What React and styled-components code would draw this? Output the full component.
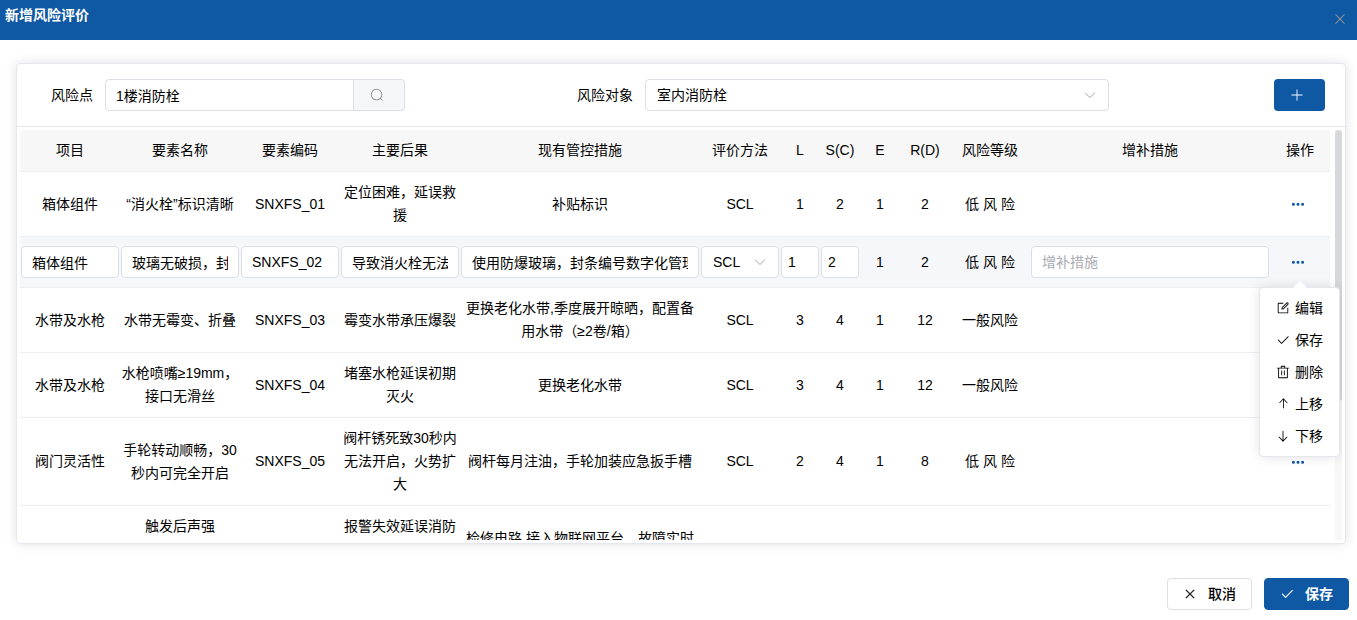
import React, { useState } from "react";
import styled, { createGlobalStyle, css } from "styled-components";

const GlobalStyle = createGlobalStyle`
  * {
    box-sizing: border-box;
  }

  body {
    margin: 0;
    background: #fff;
    color: #000;
    font-family: "Liberation Sans", "Noto Sans CJK SC", sans-serif;
    font-size: 14px;
  }

  button,
  input,
  select {
    font: inherit;
    color: inherit;
  }
`;

const icons = {
  search:
    "m795.904 750.72 124.992 124.928a32 32 0 0 1-45.248 45.248L750.656 795.904a416 416 0 1 1 45.248-45.248zM480 832a352 352 0 1 0 0-704 352 352 0 0 0 0 704z",
  arrowDown:
    "M831.872 340.864 512 652.672 192.128 340.864a30.592 30.592 0 0 0-42.752 0 29.12 29.12 0 0 0 0 41.6L489.664 714.24a32 32 0 0 0 44.672 0l340.288-331.712a29.12 29.12 0 0 0 0-41.728 30.592 30.592 0 0 0-42.752 0z",
  close:
    "M764.288 214.592 512 466.88 259.712 214.592a31.936 31.936 0 0 0-45.12 45.12L466.752 512 214.528 764.224a31.936 31.936 0 1 0 45.12 45.184L512 557.184l252.288 252.288a31.936 31.936 0 0 0 45.12-45.12L557.12 512.064l252.288-252.352a31.936 31.936 0 1 0-45.12-45.184z",
  plus:
    "M480 480V128a32 32 0 0 1 64 0v352h352a32 32 0 1 1 0 64H544v352a32 32 0 1 1-64 0V544H128a32 32 0 0 1 0-64h352z",
  check:
    "M406.656 706.944 195.84 496.256a32 32 0 1 0-45.248 45.248l256 256 512-512a32 32 0 0 0-45.248-45.248L406.592 706.944z",
  more:
    "M176 416a112 112 0 1 1 0 224 112 112 0 0 1 0-224zm336 0a112 112 0 1 1 0 224 112 112 0 0 1 0-224zm336 0a112 112 0 1 1 0 224 112 112 0 0 1 0-224z",
  edit:
    "M832 512a32 32 0 1 1 64 0v352a32 32 0 0 1-32 32H160a32 32 0 0 1-32-32V160a32 32 0 0 1 32-32h352a32 32 0 0 1 0 64H192v640h640V512z M469.952 554.24l52.8-7.552L847.104 222.4a32 32 0 1 0-45.248-45.248L477.44 501.44l-7.552 52.8zm422.4-422.4a96 96 0 0 1 0 135.808l-331.84 331.84a32 32 0 0 1-18.112 9.088L436.8 623.68a32 32 0 0 1-36.224-36.224l15.104-105.6a32 32 0 0 1 9.024-18.112l331.904-331.84a96 96 0 0 1 135.744 0z",
  remove:
    "M160 256H96a32 32 0 0 1 0-64h256V95.936a32 32 0 0 1 32-32h256a32 32 0 0 1 32 32V192h256a32 32 0 1 1 0 64h-64v672a32 32 0 0 1-32 32H192a32 32 0 0 1-32-32V256zm448-64v-64H416v64h192zM224 896h576V256H224v640zm192-128a32 32 0 0 1-32-32V416a32 32 0 0 1 64 0v320a32 32 0 0 1-32 32zm192 0a32 32 0 0 1-32-32V416a32 32 0 0 1 64 0v320a32 32 0 0 1-32 32z",
  up:
    "M572.235 205.282v600.365a30.118 30.118 0 1 1-60.235 0V205.282L292.382 438.633a28.913 28.913 0 0 1-42.646 0 33.43 33.43 0 0 1 0-45.236l271.058-288.045a28.913 28.913 0 0 1 42.647 0L834.5 393.397a33.43 33.43 0 0 1 0 45.176 28.913 28.913 0 0 1-42.647 0l-219.618-233.23z",
  down:
    "M544 805.888V168a32 32 0 1 0-64 0v637.888L246.656 557.952a30.72 30.72 0 0 0-45.312 0 35.52 35.52 0 0 0 0 48.064l288 306.048a30.72 30.72 0 0 0 45.312 0l288-306.048a35.52 35.52 0 0 0 0-48 30.72 30.72 0 0 0-45.312 0L544 805.824z"
};

const Svg = styled.svg`
  flex: none;
  display: block;
  width: ${props => props.$size}px;
  height: ${props => props.$size}px;
  fill: currentColor;
`;

const Icon = ({ name, size = 14 }) => (
  <Svg viewBox="0 0 1024 1024" $size={size} aria-hidden="true">
    <path d={icons[name]} />
  </Svg>
);

const DialogHeader = styled.header`
  display: flex;
  justify-content: space-between;
  align-items: flex-start;
  height: 40px;
  padding: 5px 9px 5px 5px;
  background: #0f59a4;
`;

const DialogTitle = styled.h1`
  margin: 0;
  font-size: 14px;
  line-height: 20px;
  font-weight: 700;
  color: #fff;
`;

const CloseButton = styled.button`
  padding: 6px 0;
  border: 0;
  background: none;
  color: #909399;
  cursor: pointer;
`;

const Card = styled.section`
  margin: 23px 11px 0 16px;
  border: 1px solid #e4e7ed;
  border-radius: 4px;
  background: #fff;
  box-shadow: 0 0 12px rgba(0, 0, 0, 0.12);
`;

const SearchForm = styled.form`
  display: grid;
  grid-template-columns: 92fr 43fr 133fr 54fr;
  padding: 15px 20px;
  border-bottom: 1px solid #e4e7ed;
`;

const Field = styled.div`
  grid-column: ${props => props.$column};
  display: flex;
  align-items: center;
`;

const Label = styled.label`
  flex: none;
  min-width: ${props => props.$width || 0}px;
  padding-right: 12px;
  text-align: right;
  line-height: 32px;
`;

const control = css`
  display: block;
  width: 100%;
  min-width: 0;
  height: 32px;
  border: 1px solid #dcdfe6;
  border-radius: 4px;
  background: #fff;
  outline: none;
`;

const Input = styled.input`
  ${control}
  padding: 0 ${props => (props.$narrow ? 6 : 10)}px;

  &::placeholder {
    color: #a8abb2;
    opacity: 1;
  }
`;

const InputGroup = styled.div`
  flex: 1;
  display: flex;

  ${Input} {
    border-radius: 4px 0 0 4px;
  }
`;

const SearchButton = styled.button`
  flex: none;
  display: flex;
  align-items: center;
  width: 51px;
  padding: 0 16px;
  border: 1px solid #dcdfe6;
  border-left: 0;
  border-radius: 0 4px 4px 0;
  background: #f5f7fa;
  color: #909399;
  cursor: pointer;
`;

const SelectBox = styled.div`
  flex: 1;
  position: relative;

  svg {
    position: absolute;
    top: 9px;
    right: 12px;
    color: #a8abb2;
    pointer-events: none;
  }
`;

const SelectControl = styled.select`
  ${control}
  padding: 0 28px 0 11px;
  appearance: none;
`;

const AddButton = styled.button`
  grid-column: 4;
  justify-self: end;
  width: 51px;
  height: 32px;
  padding: 0 16px;
  border: 0;
  border-radius: 4px;
  background: #0f59a4;
  color: #fff;
  cursor: pointer;
`;

const TableArea = styled.div`
  position: relative;
  margin: 3px;
`;

const ScrollPane = styled.div`
  height: calc(100vh - 210px);
  padding-right: 12px;
  overflow: auto;
  scrollbar-width: none;
`;

const ScrollTrack = styled.div`
  position: absolute;
  top: 0;
  right: 0;
  bottom: 0;
  width: 7px;
  background: #f7f7f7;
`;

const ScrollThumb = styled.div`
  height: 66%;
  border-radius: 4px;
  background: #d6d8db;
`;

const Table = styled.table`
  width: 100%;
  table-layout: fixed;
  border-collapse: separate;
  border-spacing: 0;
`;

const HeadCell = styled.th`
  width: ${props => (props.$width ? `${props.$width}px` : "auto")};
  padding: 9px 1px;
  border-bottom: 1px solid #ebeef5;
  background: #f7f7f7;
  font-weight: 400;
  line-height: 23px;
`;

const Row = styled.tr`
  background: ${props => (props.$editing ? "#f5f7fa" : "#fff")};
`;

const Cell = styled.td`
  padding: 9px 1px;
  border-bottom: 1px solid #ebeef5;
  line-height: 23px;
  text-align: center;
  vertical-align: middle;
`;

const Actions = styled.div`
  position: relative;
  display: flex;
  justify-content: center;
  height: 24px;
`;

const MoreButton = styled.button`
  display: flex;
  align-items: center;
  padding: 0 4px 0 0;
  border: 0;
  background: none;
  color: #0f59a4;
  cursor: pointer;
`;

const Menu = styled.div`
  position: absolute;
  z-index: 10;
  top: calc(100% + 13px);
  right: -11px;
  padding: 4px 0;
  border: 1px solid #e4e7ed;
  border-radius: 4px;
  background: #fff;
  box-shadow: 0 0 12px rgba(0, 0, 0, 0.12);

  &::before {
    content: "";
    position: absolute;
    top: -5px;
    left: 35px;
    width: 10px;
    height: 10px;
    background: #fff;
    transform: rotate(45deg);
  }
`;

const MenuItem = styled.button`
  position: relative;
  display: flex;
  align-items: center;
  gap: 5px;
  height: 32px;
  padding: 0 16px;
  border: 0;
  background: none;
  white-space: nowrap;
  cursor: pointer;
`;

const DialogFooter = styled.footer`
  display: flex;
  justify-content: flex-end;
  gap: 12px;
  margin-top: 34px;
  padding: 0 8px 10px;
`;

const FooterButton = styled.button`
  display: flex;
  align-items: center;
  gap: 11px;
  height: 32px;
  padding: 0 15px;
  border: 1px solid ${props => (props.$primary ? "#0f59a4" : "#dcdfe6")};
  border-radius: 4px;
  background: ${props => (props.$primary ? "#0f59a4" : "#fff")};
  color: ${props => (props.$primary ? "#fff" : "#000")};
  font-weight: ${props => (props.$primary ? 700 : 500)};
  line-height: 28px;
  cursor: pointer;

  svg {
    stroke: currentColor;
    stroke-width: 24;
  }
`;

const columns = [
  { key: "item", title: "项目", width: 100 },
  { key: "name", title: "要素名称", width: 120 },
  { key: "code", title: "要素编码", width: 100 },
  { key: "result", title: "主要后果", width: 120 },
  { key: "measure", title: "现有管控措施" },
  { key: "method", title: "评价方法", width: 80 },
  { key: "l", title: "L", width: 40 },
  { key: "s", title: "S(C)", width: 40 },
  { key: "e", title: "E", width: 40 },
  { key: "r", title: "R(D)", width: 50 },
  { key: "level", title: "风险等级", width: 80 },
  { key: "extra", title: "增补措施" }
];

const editable = ["item", "name", "code", "result", "measure", "l", "s", "extra"];

const initialRows = [
  {
    item: "箱体组件",
    name: "“消火栓”标识清晰",
    code: "SNXFS_01",
    result: "定位困难，延误救援",
    measure: "补贴标识",
    method: "SCL",
    l: 1,
    s: 2,
    e: 1,
    r: 2,
    level: "低 风 险",
    extra: ""
  },
  {
    item: "箱体组件",
    name: "玻璃无破损，封条完好",
    code: "SNXFS_02",
    result: "导致消火栓无法使用",
    measure: "使用防爆玻璃，封条编号数字化管理",
    method: "SCL",
    l: 1,
    s: 2,
    e: 1,
    r: 2,
    level: "低 风 险",
    extra: ""
  },
  {
    item: "水带及水枪",
    name: "水带无霉变、折叠",
    code: "SNXFS_03",
    result: "霉变水带承压爆裂",
    measure: "更换老化水带,季度展开晾晒，配置备用水带（≥2卷/箱）",
    method: "SCL",
    l: 3,
    s: 4,
    e: 1,
    r: 12,
    level: "一般风险",
    extra: ""
  },
  {
    item: "水带及水枪",
    name: "水枪喷嘴≥19mm，接口无滑丝",
    code: "SNXFS_04",
    result: "堵塞水枪延误初期灭火",
    measure: "更换老化水带",
    method: "SCL",
    l: 3,
    s: 4,
    e: 1,
    r: 12,
    level: "一般风险",
    extra: ""
  },
  {
    item: "阀门灵活性",
    name: "手轮转动顺畅，30秒内可完全开启",
    code: "SNXFS_05",
    result: "阀杆锈死致30秒内无法开启，火势扩大",
    measure: "阀杆每月注油，手轮加装应急扳手槽",
    method: "SCL",
    l: 2,
    s: 4,
    e: 1,
    r: 8,
    level: "低 风 险",
    extra: ""
  },
  {
    item: "报警按钮",
    name: "触发后声强≥85dB(3m)，信号反馈至消防控制室",
    code: "SNXFS_06",
    result: "报警失效延误消防响应，造成火灾蔓延扩大",
    measure: "检修电路,接入物联网平台，故障实时推送",
    method: "SCL",
    l: 2,
    s: 4,
    e: 1,
    r: 8,
    level: "低 风 险",
    extra: ""
  }
];

const actions = [
  { icon: "edit", text: "编辑" },
  { icon: "check", text: "保存" },
  { icon: "remove", text: "删除" },
  { icon: "up", text: "上移" },
  { icon: "down", text: "下移" }
];

function Select({ options, ...rest }) {
  return (
    <SelectBox>
      <SelectControl {...rest}>
        {options.map(option => (
          <option key={option}>{option}</option>
        ))}
      </SelectControl>
      <Icon name="arrowDown" />
    </SelectBox>
  );
}

function EditCell({ column, value, onChange }) {
  if (column.key === "method") {
    return (
      <Select
        aria-label={column.title}
        options={["SCL", "LEC"]}
        value={value}
        onChange={onChange}
      />
    );
  }

  if (editable.includes(column.key)) {
    return (
      <Input
        aria-label={column.title}
        placeholder={column.title}
        $narrow={column.width === 40}
        value={value}
        onChange={onChange}
      />
    );
  }

  return value;
}

function RowActions({ open, onToggle }) {
  return (
    <Actions>
      <MoreButton type="button" aria-label="操作" aria-expanded={open} onClick={onToggle}>
        <Icon name="more" />
      </MoreButton>
      {open && (
        <Menu>
          {actions.map(action => (
            <MenuItem type="button" key={action.text}>
              <Icon name={action.icon} />
              {action.text}
            </MenuItem>
          ))}
        </Menu>
      )}
    </Actions>
  );
}

export default function App() {
  const [rows, setRows] = useState(initialRows);
  const [point, setPoint] = useState("1楼消防栓");
  const [openRow, setOpenRow] = useState(1);
  const editingRow = 1;

  const handleChange = (index, key, value) => {
    setRows(rows.map((row, i) => (i === index ? { ...row, [key]: value } : row)));
  };

  return (
    <>
      <GlobalStyle />
      <DialogHeader>
        <DialogTitle>新增风险评价</DialogTitle>
        <CloseButton type="button" aria-label="关闭">
          <Icon name="close" size={16} />
        </CloseButton>
      </DialogHeader>

      <Card>
        <SearchForm onSubmit={e => e.preventDefault()}>
          <Field $column={1}>
            <Label htmlFor="point" $width={68}>
              风险点
            </Label>
            <InputGroup>
              <Input id="point" value={point} onChange={e => setPoint(e.target.value)} />
              <SearchButton type="button" aria-label="搜索">
                <Icon name="search" />
              </SearchButton>
            </InputGroup>
          </Field>
          <Field $column={3}>
            <Label htmlFor="target">风险对象</Label>
            <Select id="target" options={["室内消防栓"]} />
          </Field>
          <AddButton type="button" aria-label="新增">
            <Icon name="plus" />
          </AddButton>
        </SearchForm>

        <TableArea>
          <ScrollPane>
            <Table>
              <thead>
                <tr>
                  {columns.map(column => (
                    <HeadCell key={column.key} $width={column.width}>
                      {column.title}
                    </HeadCell>
                  ))}
                  <HeadCell $width={60}>操作</HeadCell>
                </tr>
              </thead>
              <tbody>
                {rows.map((row, index) => (
                  <Row key={index} $editing={index === editingRow}>
                    {columns.map(column => (
                      <Cell key={column.key}>
                        {index === editingRow ? (
                          <EditCell
                            column={column}
                            value={row[column.key]}
                            onChange={e => handleChange(index, column.key, e.target.value)}
                          />
                        ) : (
                          row[column.key]
                        )}
                      </Cell>
                    ))}
                    <Cell>
                      <RowActions
                        open={index === openRow}
                        onToggle={() => setOpenRow(index === openRow ? null : index)}
                      />
                    </Cell>
                  </Row>
                ))}
              </tbody>
            </Table>
          </ScrollPane>
          <ScrollTrack>
            <ScrollThumb />
          </ScrollTrack>
        </TableArea>
      </Card>

      <DialogFooter>
        <FooterButton type="button">
          <Icon name="close" />
          取消
        </FooterButton>
        <FooterButton type="button" $primary>
          <Icon name="check" />
          保存
        </FooterButton>
      </DialogFooter>
    </>
  );
}
